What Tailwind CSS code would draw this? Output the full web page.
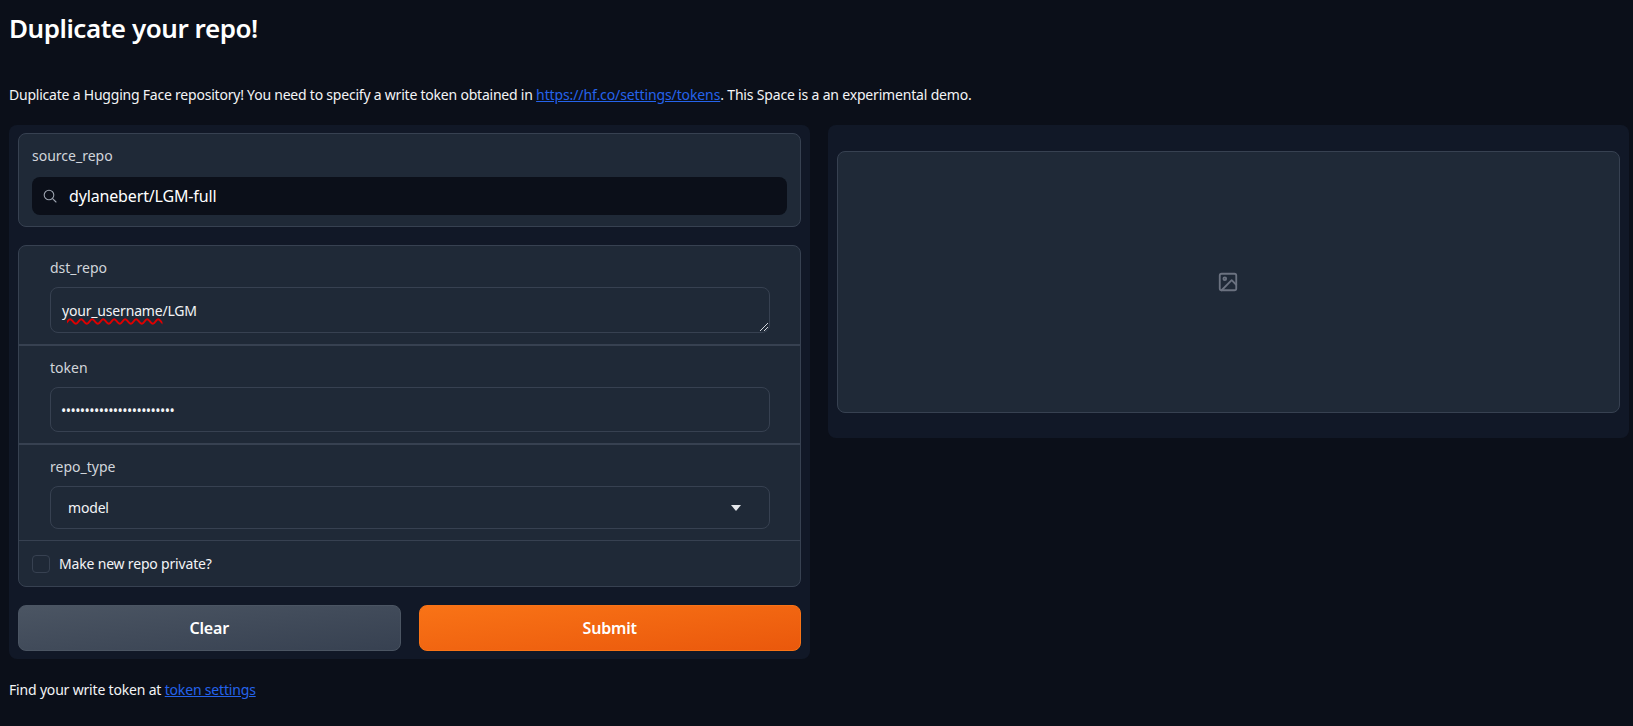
<!DOCTYPE html>
<html lang="en">
<head>
    <meta charset="UTF-8">
    <meta name="viewport" content="width=device-width, initial-scale=1.0">
    <title>Duplicate your repo!</title>
    <script src="https://cdn.jsdelivr.net/npm/@tailwindcss/browser@4"></script>
</head>
<body class="bg-[#0b0f19] text-[#f3f4f6] font-['Noto_Sans',sans-serif] text-[14px] tracking-[-0.18px] h-[726px] overflow-hidden">
    <div class="pl-[9px] pr-[4px]">
        <h1 class="pt-[10px] h-[81px] text-[26px] leading-[36px] font-semibold text-white tracking-[-0.45px]">Duplicate your repo!</h1>
        <p class="h-[44px] leading-[28px]"><span class="tracking-[-0.217px]">Duplicate a Hugging Face repository! You need to specify a write token obtained in </span><a href="#" class="text-[#2563eb] underline tracking-[-0.11px]">https://hf.co/settings/tokens</a>. This Space is a an experimental demo.</p>

        <div class="grid grid-cols-[801px_801px] gap-[18px] items-start">
            <!-- left column -->
            <div class="bg-[#111827] rounded-lg px-[9px] py-[8px] h-[534px]">
                <div class="bg-[#1f2937] border border-[#374151] rounded-lg h-[94px] px-[13px] pt-[11px]">
                    <label class="block leading-[22px] text-[#d1d5db] tracking-normal">source_repo</label>
                    <div class="mt-[10px] h-[38px] bg-[#0b0f19] rounded-lg flex items-center pl-[11px] gap-[12px] text-[16px] tracking-[-0.15px]">
                        <svg class="w-[14px] h-[14px] text-[#9ca3af]" viewBox="0 0 14 14" fill="none" stroke="currentColor" stroke-width="1.1" stroke-linecap="round">
                            <circle cx="6" cy="6" r="4.8"></circle>
                            <path d="M9.6 9.6L13 13"></path>
                        </svg>
                        <span class="text-white">dylanebert/LGM-full</span>
                    </div>
                </div>

                <div class="mt-[18px] bg-[#1f2937] border border-[#374151] rounded-lg h-[342px]">
                    <div class="h-[100px] pl-[31px] pr-[30px] pt-[11px] border-b-2 border-[#374151]">
                        <label class="block leading-[22px] text-[#d1d5db] tracking-normal">dst_repo</label>
                        <div class="relative mt-[8px] h-[46px] border border-[#374151] rounded-lg px-[11px] pt-[12px] leading-[22px]">
                            <span class="underline decoration-wavy decoration-[#e00000] decoration-[1.5px] underline-offset-2">your_username</span>/LGM
                            <svg class="absolute right-[1px] bottom-[1px] w-[9px] h-[9px] text-[#d1d5db]" viewBox="0 0 9 9" fill="none" stroke="currentColor" stroke-width="1">
                                <path d="M1 9L9 1M5 9L9 5"></path>
                            </svg>
                        </div>
                    </div>
                    <div class="h-[99px] pl-[31px] pr-[30px] pt-[11px] border-b-2 border-[#374151]">
                        <label class="block leading-[22px] text-[#d1d5db] tracking-normal">token</label>
                        <input type="password" readonly value="hf_xxxxxxxxxxxxxxxxxxxxx" class="block w-full mt-[8px] h-[45px] border border-[#374151] rounded-lg pl-[10px] pr-[10px] pt-[2px] outline-none tracking-[-0.55px]">
                    </div>
                    <div class="h-[96px] pl-[31px] pr-[30px] pt-[11px] border-b border-[#374151]">
                        <label class="block leading-[22px] text-[#d1d5db] tracking-normal">repo_type</label>
                        <div class="mt-[8px] h-[43px] border border-[#374151] rounded-lg flex items-center justify-between pl-[17px] pr-[28px]">
                            <span>model</span>
                            <svg class="w-[10px] h-[6px] text-[#e5e7eb]" viewBox="0 0 10 6" fill="currentColor"><path d="M0 0H10L5 6Z"></path></svg>
                        </div>
                    </div>
                    <label class="flex items-center gap-[9px] h-[45px] px-[13px]">
                        <span class="w-[18px] h-[18px] rounded border border-[#374151] bg-[#1f2937]"></span>
                        <span>Make new repo private?</span>
                    </label>
                </div>

                <div class="mt-[18px] grid grid-cols-2 gap-[18px]">
                    <button class="h-[46px] rounded-lg border border-[#4b5563] bg-linear-to-br from-[#4b5563] to-[#374151] font-semibold text-[16px] text-white">Clear</button>
                    <button class="h-[46px] rounded-lg border border-[#f97316] bg-linear-to-br from-[#f97316] to-[#ea580c] font-semibold text-[16px] text-white">Submit</button>
                </div>
            </div>

            <!-- right column -->
            <div class="bg-[#111827] rounded-lg h-[313px] px-[9px] pt-[26px]">
                <div class="h-[262px] bg-[#1f2937] border border-[#374151] rounded-lg flex items-center justify-center pr-[2px]">
                    <svg class="w-[22px] h-[22px] text-[#6b7280]" viewBox="0 0 24 24" fill="none" stroke="currentColor" stroke-width="2" stroke-linecap="round" stroke-linejoin="round">
                        <rect x="3" y="3" width="18" height="18" rx="2" ry="2"></rect>
                        <circle cx="8.5" cy="8.5" r="1.5"></circle>
                        <path d="M21 15L16 10L5 21"></path>
                    </svg>
                </div>
            </div>
        </div>

        <p class="mt-[20px] leading-[22px]">Find your write token at <a href="#" class="text-[#2563eb] underline">token settings</a></p>
    </div>
</body>
</html>
